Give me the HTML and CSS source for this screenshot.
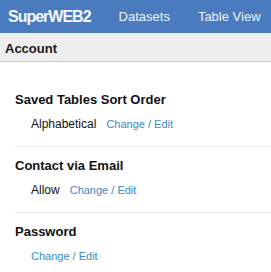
FILE: index.html
```html
<!DOCTYPE html>
<html>
<head>
<meta charset="utf-8">
<link rel="stylesheet" href="styles.css">
</head>
<body>
<header class="topbar">
  <span class="brand">SuperWEB2</span>
  <a class="nav-item">Datasets</a>
  <a class="nav-item">Table View</a>
</header>
<div class="subbar">Account</div>
<main class="content">
  <section class="setting">
    <div class="setting-title">Saved Tables Sort Order</div>
    <div class="setting-value"><span>Alphabetical</span><a class="edit-link">Change / Edit</a></div>
  </section>
  <section class="setting">
    <div class="setting-title">Contact via Email</div>
    <div class="setting-value"><span>Allow</span><a class="edit-link">Change / Edit</a></div>
  </section>
  <section class="setting last">
    <div class="setting-title">Password</div>
    <div class="setting-value"><a class="edit-link first">Change / Edit</a></div>
  </section>
</main>
</body>
</html>
```
FILE: styles.css
```css
html, body {
  margin: 0;
  padding: 0;
  background: #ffffff;
  font-family: "Liberation Sans", Arial, sans-serif;
  color: #111111;
}

.topbar {
  display: flex;
  align-items: center;
  height: 33px;
  background: #4a7bbf;
  color: #f2f5fb;
  white-space: nowrap;
  overflow: hidden;
}

.brand {
  padding: 0 14px 0 8px;
  font-size: 16px;
  font-weight: bold;
  letter-spacing: -1px;
  line-height: 33px;
  color: #f4f7fc;
}

.nav-item {
  padding: 0 14px;
  font-size: 13px;
  line-height: 33px;
  color: #eef2fa;
}

.subbar {
  height: 24px;
  padding: 4px 0 0 5px;
  line-height: 24px;
  font-size: 13px;
  font-weight: bold;
  background: #eeeeee;
  border-bottom: 1px solid #cccccc;
  color: #1a1a1a;
}

.content {
  padding-top: 19px;
}

.setting {
  margin-left: 15px;
  padding: 11px 0 14px;
  border-bottom: 1px solid #ebebeb;
}

.setting.last {
  border-bottom: none;
}

.setting-title {
  font-size: 13px;
  font-weight: bold;
  line-height: 16px;
  color: #111111;
}

.setting-value {
  display: flex;
  align-items: baseline;
  margin-top: 8px;
  padding-left: 16px;
  font-size: 12px;
  line-height: 16px;
  color: #111111;
}

.edit-link {
  margin-left: 10px;
  font-size: 11px;
  color: #3a8ac6;
}

.edit-link.first {
  margin-left: 0;
}
```
